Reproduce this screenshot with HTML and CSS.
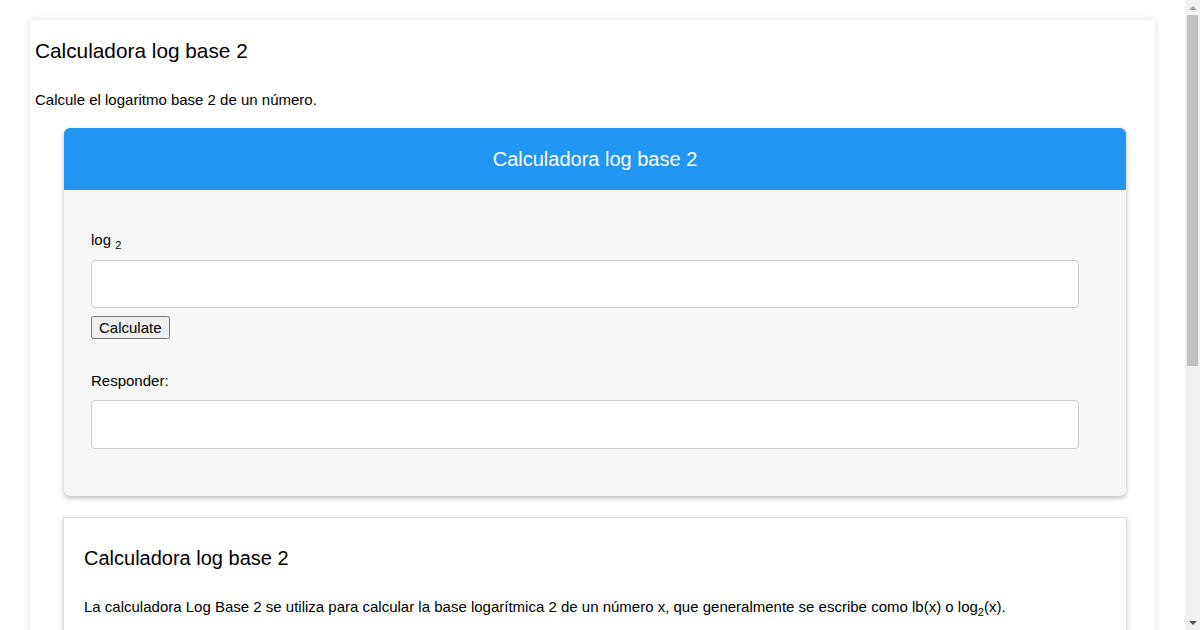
FILE: index.html
```html
<!DOCTYPE html>
<html lang="es">
<head>
<meta charset="utf-8">
<title>Calculadora log base 2</title>
<link rel="stylesheet" href="styles.css">
</head>
<body>
<div class="page">
  <h1 class="page-title">Calculadora log base 2</h1>
  <p class="intro">Calcule el logaritmo base 2 de un número.</p>

  <div class="calc">
    <div class="calc-head">Calculadora log base 2</div>
    <div class="calc-body">
      <label class="field-label" for="x">log <sub>2</sub></label>
      <input class="field" id="x" type="text">
      <button class="calc-btn" type="button">Calculate</button>
      <label class="field-label answer-label" for="y">Responder:</label>
      <input class="field field-out" id="y" type="text">
    </div>
  </div>

  <div class="info">
    <h2 class="info-title">Calculadora log base 2</h2>
    <p class="info-text">La calculadora Log Base 2 se utiliza para calcular la base logarítmica 2 de un número x, que generalmente se escribe como lb(x) o log<sub>2</sub>(x).</p>
  </div>
</div>

<div class="scrollbar" aria-hidden="true">
  <div class="sb-arrow sb-up"></div>
  <div class="sb-track"><div class="sb-thumb"></div></div>
  <div class="sb-arrow sb-down"></div>
</div>
</body>
</html>
```

FILE: styles.css
```css
html, body {
  margin: 0;
  padding: 0;
  background: #ffffff;
  font-family: "Liberation Sans", Arial, sans-serif;
  color: #000;
  overflow: hidden;
  height: 630px;
}

.page {
  margin: 20px 45px 0 30px;
  padding: 1px 0 30px 5px;
  background: #fff;
  box-shadow: 0 0 8px rgba(0, 0, 0, 0.12);
}

.page-title {
  font-size: 20.8px;
  font-weight: normal;
  line-height: 24px;
  margin: 18px 0 0 0;
}

.intro {
  font-size: 15px;
  line-height: 17px;
  margin: 28px 0 0 0;
}

.calc {
  width: 1062px;
  margin: 20px auto 0 auto;
  border-radius: 6px;
  background: #f7f7f7;
  box-shadow: 0 2px 5px rgba(0, 0, 0, 0.28);
  overflow: hidden;
}

.calc-head {
  height: 62px;
  background: #2196f3;
  color: #fff;
  font-size: 20px;
  display: flex;
  align-items: center;
  justify-content: center;
}

.calc-body {
  padding: 41px 27px 47px 27px;
  display: flex;
  flex-direction: column;
  align-items: flex-start;
}

.field-label {
  font-size: 15px;
  line-height: 17px;
}

.field-label sub {
  font-size: 11px;
}

.field {
  box-sizing: border-box;
  width: 988px;
  height: 48px;
  margin-top: 6px;
  border: 1px solid #cccccc;
  border-radius: 4px;
  background: #fff;
  font-size: 15px;
  padding: 0 10px;
}

.field-out {
  height: 49px;
  margin-top: 11px;
}

.calc-btn {
  margin-top: 8px;
  font-family: "Liberation Sans", Arial, sans-serif;
  font-size: 15px;
}

.answer-label {
  margin-top: 33px;
}

.info {
  width: 1022px;
  margin: 21px auto 0 auto;
  padding: 1px 20px 40px 20px;
  border: 1px solid #dddddd;
  background: #fff;
  box-shadow: 0 2px 5px rgba(0, 0, 0, 0.18);
}

.info-title {
  font-size: 20px;
  font-weight: normal;
  line-height: 23px;
  margin: 28px 0 0 0;
}

.info-text {
  font-size: 15px;
  line-height: 17px;
  margin: 28px 0 0 0;
}

.info-text sub, .info-text sup {
  font-size: 11px;
}

.scrollbar {
  position: fixed;
  top: 0;
  right: 0;
  width: 15px;
  height: 630px;
  background: #f1f1f1;
  display: flex;
  flex-direction: column;
}

.sb-arrow {
  height: 15px;
  display: flex;
  align-items: center;
  justify-content: center;
}

.sb-arrow::before {
  content: "";
  width: 0;
  height: 0;
  border-left: 4px solid transparent;
  border-right: 4px solid transparent;
}

.sb-up::before {
  border-bottom: 4px solid #a3a3a3;
}

.sb-down::before {
  border-top: 4px solid #505050;
}

.sb-track {
  flex: 1;
  padding: 0 2px;
}

.sb-thumb {
  height: 351px;
  background: #c1c1c1;
}
```
